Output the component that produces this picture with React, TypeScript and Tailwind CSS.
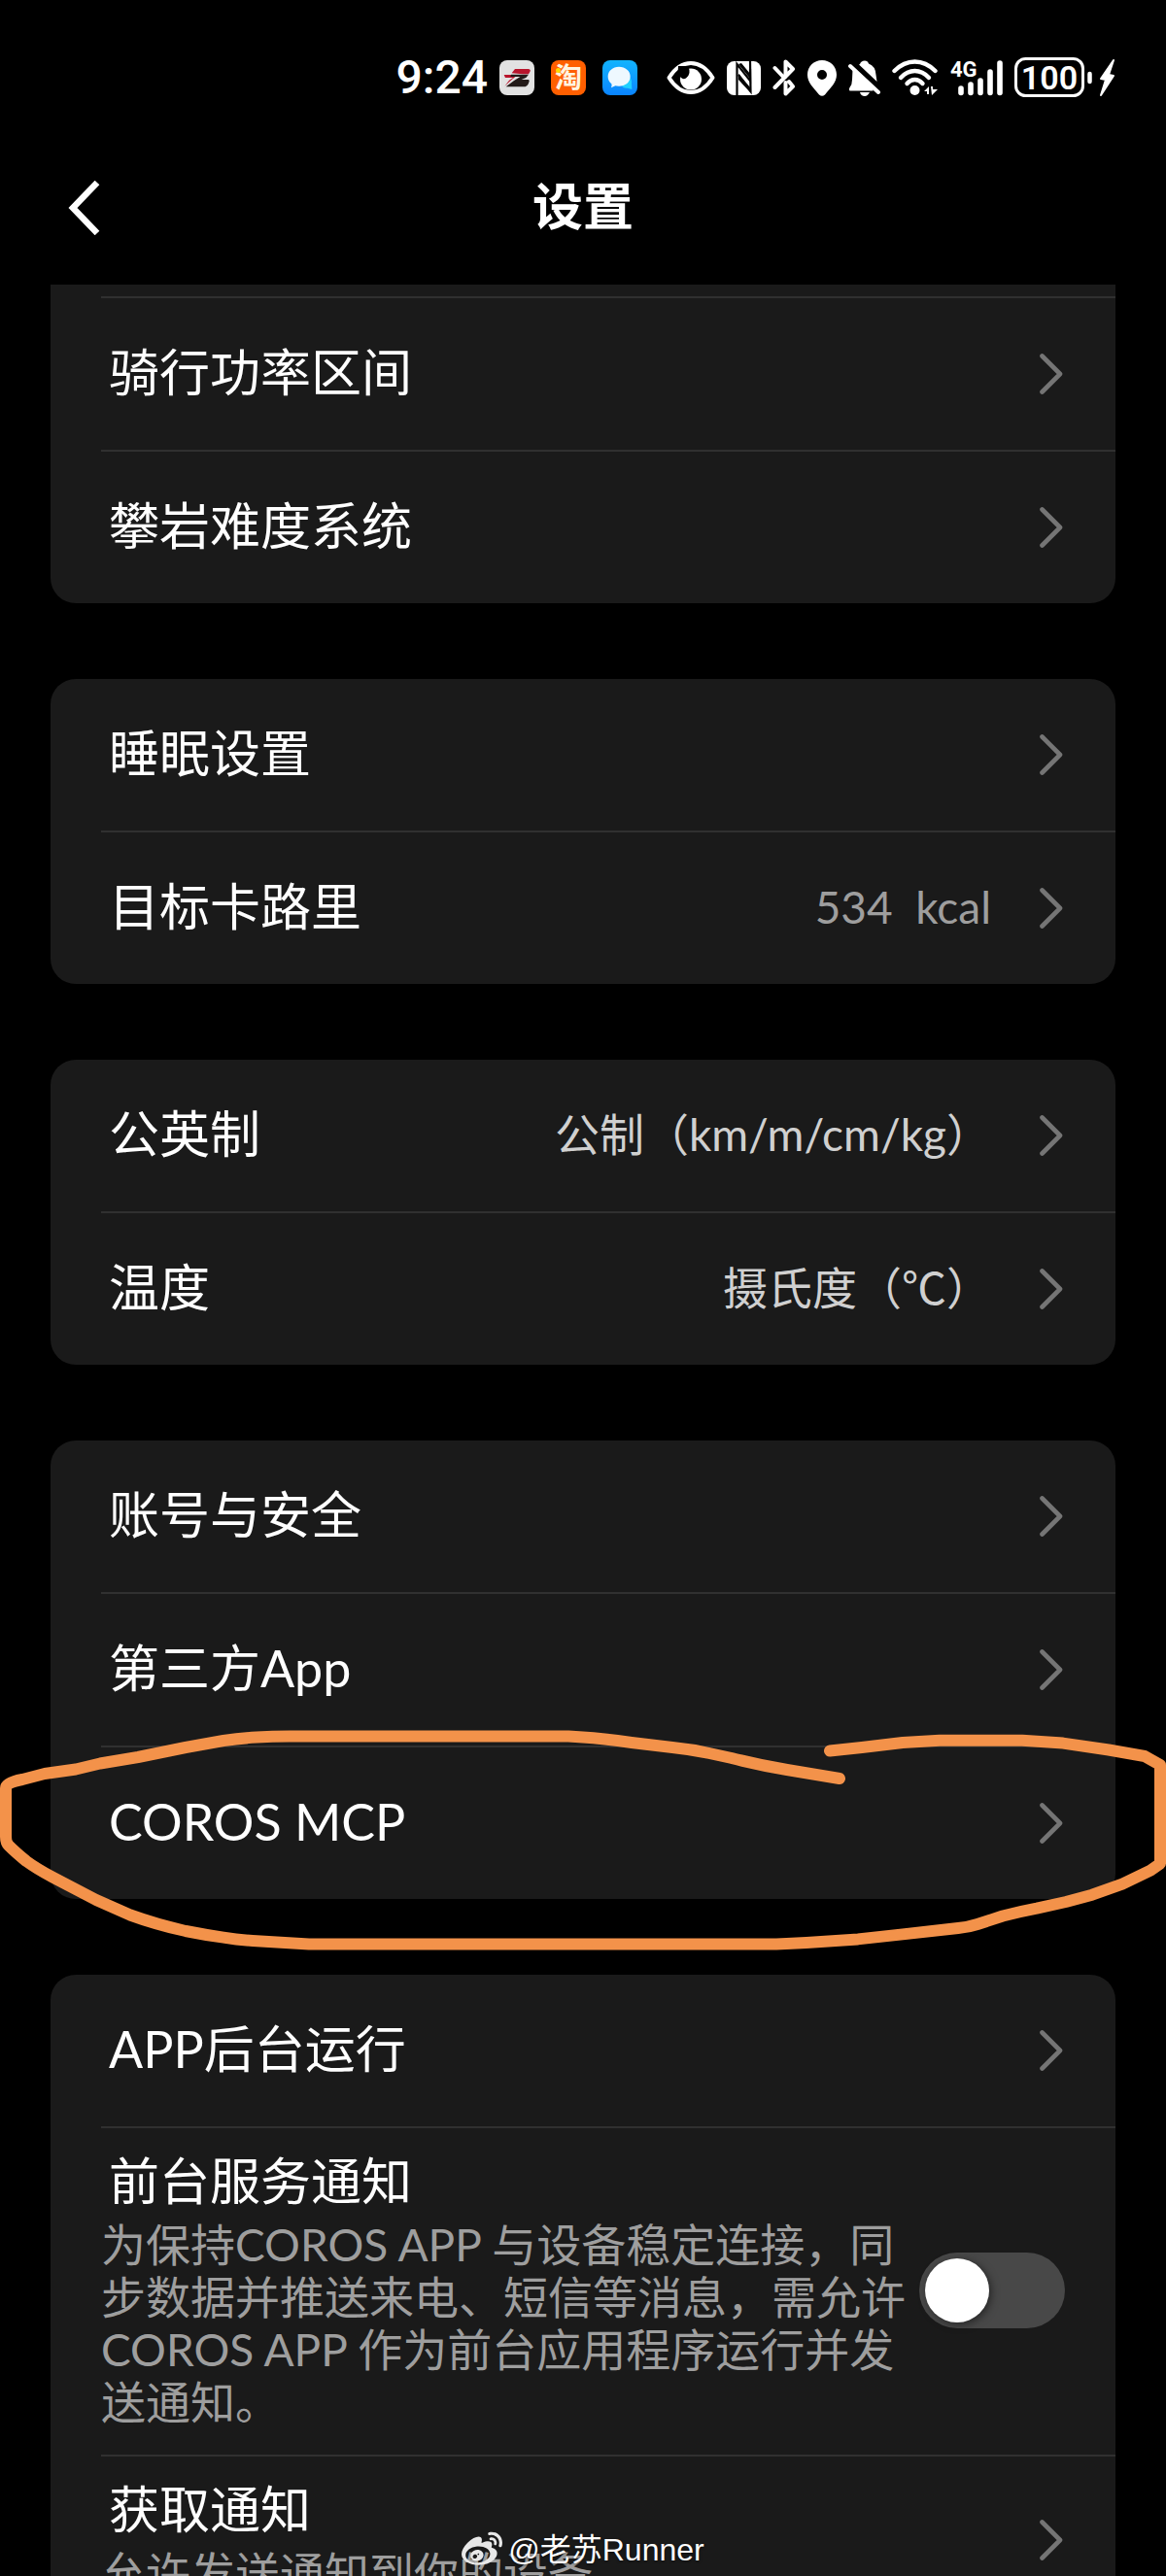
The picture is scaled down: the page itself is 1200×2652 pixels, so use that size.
import { useState } from "react";
import { FaWeibo } from "react-icons/fa";

type Item = {
  label: string;
  value?: string;
  muted?: boolean;
  description?: string;
  toggle?: boolean;
};

const groups: Item[][] = [
  [{ label: "骑行功率区间" }, { label: "攀岩难度系统" }],
  [{ label: "睡眠设置" }, { label: "目标卡路里", value: "534  kcal", muted: true }],
  [
    { label: "公英制", value: "公制（km/m/cm/kg）" },
    { label: "温度", value: "摄氏度（℃）" },
  ],
  [{ label: "账号与安全" }, { label: "第三方App" }, { label: "COROS MCP" }],
  [
    { label: "APP后台运行" },
    {
      label: "前台服务通知",
      description:
        "为保持COROS APP 与设备稳定连接，同步数据并推送来电、短信等消息，需允许COROS APP 作为前台应用程序运行并发送通知。",
      toggle: true,
    },
    { label: "获取通知", description: "允许发送通知到你的设备" },
  ],
];

function Chevron() {
  return (
    <svg className="h-11 w-6 shrink-0" viewBox="0 0 24 44" fill="none" aria-hidden="true">
      <path
        d="M2.5 3.5 L21 22 L2.5 40.5"
        stroke="#757575"
        strokeWidth="4.6"
        strokeLinecap="round"
        strokeLinejoin="round"
      />
    </svg>
  );
}

function Divider() {
  return <div className="ml-13 h-0.5 bg-[#303030]" />;
}

function Row({ item }: { item: Item }) {
  const [on, setOn] = useState(false);

  if (item.description) {
    const text = (
      <span className="flex-1">
        <span className="block pl-2 text-[52px] leading-[60px] text-white">{item.label}</span>
        <span className="mt-[9px] block text-[46px] leading-[54px] text-[#9e9e9e]">
          {item.description}
        </span>
      </span>
    );

    if (item.toggle) {
      return (
        <label className="flex items-center pt-6 pr-13 pb-[27px] pl-13">
          {text}
          <input
            type="checkbox"
            role="switch"
            checked={on}
            onChange={() => setOn(!on)}
            className="relative h-[78px] w-[150px] shrink-0 appearance-none rounded-full bg-[#484848] before:absolute before:top-1.5 before:left-1.5 before:size-[66px] before:rounded-full before:bg-white before:shadow-[2px_2px_8px_rgba(0,0,0,0.5)] checked:bg-[#f3924a] checked:before:left-[78px]"
          />
        </label>
      );
    }

    return (
      <button type="button" className="flex w-full items-center pt-6 pr-[54px] pb-[27px] pl-13 text-left">
        {text}
        <Chevron />
      </button>
    );
  }

  return (
    <button type="button" className="flex h-[156px] w-full items-center pr-[54px] pl-15 text-left">
      <span className="pb-1 text-[52px] leading-[60px] text-white">{item.label}</span>
      <span
        className={`mr-[50px] ml-auto pb-0.5 text-[46px] leading-[54px] whitespace-pre ${
          item.muted ? "text-[#9e9e9e]" : "text-[#d0d0d0]"
        }`}
      >
        {item.value}
      </span>
      <Chevron />
    </button>
  );
}

function Group({ items, cut }: { items: Item[]; cut?: boolean }) {
  return (
    <div className={`overflow-hidden bg-[#1a1a1a] ${cut ? "rounded-b-[26px] pt-3" : "rounded-[26px]"}`}>
      {items.map((item, index) => (
        <div key={item.label}>
          {(index > 0 || cut) && <Divider />}
          <Row item={item} />
        </div>
      ))}
    </div>
  );
}

/* Hand-drawn marker loop around the last row of a group */
function MarkerLoop() {
  return (
    <svg
      className="pointer-events-none absolute inset-x-0 -bottom-[60px] h-60 w-full"
      viewBox="0 1775 1200 240"
      preserveAspectRatio="none"
      fill="none"
      aria-hidden="true"
    >
      <path
        d="M864 1831 L810 1822 Q780 1817 753 1810 L730 1805 Q712 1801 692 1799 L650 1794 Q620 1790 600 1788.6 L585 1787.5 H298 Q280 1787.5 264 1788.6 Q247 1789.5 230 1792 L191 1799 L142 1809 L103 1815.5 L78 1821.5 L46 1826 L23 1832 Q6 1835 6 1841 V1891 Q6 1897 9 1900 Q16 1907 27 1916 Q38 1924 54 1932.5 L99 1956 L134 1971.5 Q160 1981 191 1988 Q211 1992 230 1994.6 Q245 1997 260 1998 L318 2001.4 H799 Q815 2001 830 2000 L883 1996.4 L929 1991.4 L986 1985 Q997 1984 1006 1981 L1032 1972.5 Q1049 1968 1067 1964.6 L1097 1958 L1124 1950.7 L1155 1939.6 L1184 1925.7 L1194 1918.6 V1817 L1178 1808 L1141 1801.5 L1094 1794.6 L1052 1791.8 H967 L929 1794 L887 1799 L854 1802.5"
        stroke="#f3924a"
        strokeWidth="12"
        strokeLinecap="round"
        strokeLinejoin="round"
      />
    </svg>
  );
}

function StatusBar() {
  return (
    <div className="flex items-center justify-end gap-3 pt-[52px] pr-13 font-[Roboto,'Noto_Sans_CJK_SC',sans-serif] text-white">
      <span className="text-[48px] leading-[56px] font-medium">9:24</span>

      <div className="mr-[18px] flex gap-[17px]">
        <svg className="size-9" viewBox="0 0 108 108" aria-hidden="true">
          <rect width="108" height="108" rx="24" fill="#e2e2e2" />
          <path d="M48 27 H90 Q98 29 94 36 L90 43 H72 L38 40 Z" fill="#b8152c" />
          <path d="M14 45 H56 L34 64 L16 80 L30 62 L42 54 H18 Z" fill="#b8152c" />
          <path d="M36 44 H90 L82 54 L68 60 H90 Q94 62 91 68 Q87 82 74 82 H20 L44 64 L64 51 H34 Z" fill="#231a18" />
        </svg>
        <svg className="size-9" viewBox="0 0 36 36" aria-hidden="true">
          <rect width="36" height="36" rx="8" fill="#ff5f00" />
          <text x="4" y="28" fontSize="28" fontWeight="700" fill="#fff4e0">
            淘
          </text>
          <circle cx="7.5" cy="10.5" r="2.5" fill="#ffd800" />
        </svg>
        <svg className="size-9" viewBox="0 0 108 108" aria-hidden="true">
          <defs>
            <linearGradient id="chat" x1="0" y1="0" x2="0" y2="1">
              <stop offset="0" stopColor="#12b4ff" />
              <stop offset="1" stopColor="#0a84ff" />
            </linearGradient>
          </defs>
          <rect width="108" height="108" rx="24" fill="url(#chat)" />
          <path d="M82 50 Q92 58 90 72 L91 90 L78 86 Q66 88 60 80 Z" fill="#1fd0ff" />
          <path
            d="M51 20 C71 20 86 33 86 50 C86 67 71 80 51 80 Q44 80 40 79 L27 85 Q30 78 28 73 Q17 64 17 50 C17 33 32 20 51 20 Z"
            fill="#eef8ff"
          />
        </svg>
      </div>

      {/* eye comfort */}
      <svg className="h-[34px] w-[50px]" viewBox="0 0 50 34" aria-hidden="true">
        <path
          d="M2.5 17 Q12 2 25 2 Q38 2 47.5 17 Q38 32 25 32 Q12 32 2.5 17 Z"
          fill="none"
          stroke="#fff"
          strokeWidth="4"
          strokeLinejoin="round"
        />
        <circle cx="25" cy="18.5" r="11" fill="#fff" />
        <path d="M12 5 H22 Q26 13 20 17.5 Q17 19.5 14.5 16.5 Q11 14 12 5 Z" fill="#000" />
      </svg>

      {/* NFC */}
      <svg className="h-[35px] w-[35px]" viewBox="0 0 35 35" aria-hidden="true">
        <rect width="35" height="35" rx="7.5" fill="#fff" />
        <path
          d="M10.500 35 L10.500 3 L24 20 V8"
          fill="none"
          stroke="#000"
          strokeWidth="2.200"
        />
        <path d="M24 0 L24.500 31 L12 14" fill="none" stroke="#000" strokeWidth="2.200" />
        <path d="M12 3 L24 18 V13 L15 2 Z M12 13 V19 L24 32 V27 Z" fill="#000" />
      </svg>

      {/* bluetooth */}
      <svg className="h-[38px] w-6" viewBox="0 0 24 38" fill="none" aria-hidden="true">
        <path
          d="M2.5 9 L11 18 M2.5 29 L21 10 L13.500 2.500 V18 M13.500 24 V35.500 L21 28 L17 23"
          stroke="#fff"
          strokeWidth="4"
          strokeLinecap="round"
          strokeLinejoin="round"
        />
      </svg>

      {/* location */}
      <svg className="h-[37px] w-[30px]" viewBox="0 0 30 37" aria-hidden="true">
        <path
          fillRule="evenodd"
          fill="#fff"
          d="M15 0 C6.5 0 0 6.5 0 15 C0 23 6 28 12 35.5 Q15 38 18 35.5 C24 28 30 23 30 15 C30 6.5 23.5 0 15 0 Z M15 10 A5 5 0 1 1 15 20 A5 5 0 1 1 15 10 Z"
        />
      </svg>

      {/* muted bell */}
      <svg className="h-[37px] w-[33px]" viewBox="0 0 33 37" aria-hidden="true">
        <path d="M12 4 Q13 0.5 17 0.5 Q20 0.5 21 3.5 Q28 6 28.5 15 L29.5 22 L11 4.5 Z" fill="#fff" />
        <path d="M4.5 9.5 L25.5 29 V31.5 H1.5 Q0 30 1.5 28 Q4 25 4 20 Z" fill="#fff" />
        <path d="M12 33 H22 Q20 37 17 37 Q13 37 12 33 Z" fill="#fff" />
        <path d="M5 4 L33 30" stroke="#000" strokeWidth="3" />
        <path d="M2 6 L31 33" stroke="#fff" strokeWidth="4" strokeLinecap="round" />
      </svg>

      {/* wifi */}
      <svg className="h-[38px] w-[48px]" viewBox="0 0 48 38" fill="none" aria-hidden="true">
        <g stroke="#fff" strokeWidth="4.4" strokeLinecap="round">
          <path d="M2.5 12 Q12 2.5 23.5 2.5 Q35 2.5 44.5 12" />
          <path d="M9 19 Q15.5 12 23.5 12 Q31.5 12 38 19" />
          <path d="M15.5 25 Q19 21 23.5 21 Q28 21 31.5 25" />
        </g>
        <circle cx="23.5" cy="32" r="5" fill="#fff" />
        <path d="M33 33 L38 28 V36 H36 V33 Z M40 28 H42 V31 H47 L41 37 Z" fill="#fff" />
      </svg>

      {/* mobile signal */}
      <svg className="h-[38px] w-[54px] overflow-visible" viewBox="0 0 54 38" aria-hidden="true">
        <text x="0" y="18" fontSize="22" fontWeight="700" fill="#fff">
          4G
        </text>
        <g stroke="#fff" strokeWidth="5.6" strokeLinecap="round">
          <path d="M11 30 V34.5 M21 26 V34.5 M31 22 V34.5 M41 13 V34.5 M51 4 V34.5" />
        </g>
      </svg>

      <div className="flex items-center gap-[7px]">
        <svg className="h-[42px] w-20" viewBox="0 0 80 42" aria-hidden="true">
          <rect x="1.5" y="1.5" width="69" height="38" rx="10" fill="none" stroke="#fff" strokeWidth="3" />
          <path d="M77.5 17 V25" stroke="#fff" strokeWidth="4.5" strokeLinecap="round" />
          <text x="36" y="33" textAnchor="middle" fontSize="34" fontWeight="600" fill="#fff">
            100
          </text>
        </svg>
        <svg className="h-10 w-[17px]" viewBox="0 0 17 40" aria-hidden="true">
          <path
            d="M15 2 L2 21 L7 22 L2 38 L15 18 L10 17 Z"
            fill="#fff"
            stroke="#fff"
            strokeWidth="2"
            strokeLinejoin="round"
          />
        </svg>
      </div>
    </div>
  );
}

export default function App() {
  return (
    <div
      lang="zh-CN"
      className="relative flex h-screen flex-col overflow-hidden bg-black font-[Lato,'Noto_Sans_CJK_SC',sans-serif]"
    >
      <StatusBar />

      <header className="grid h-[185px] shrink-0 grid-cols-[1fr_auto_1fr] items-center px-[66px] pt-[26px]">
        <button type="button" aria-label="返回" className="justify-self-start">
          <svg className="h-14 w-10" viewBox="0 0 40 56" fill="none" aria-hidden="true">
            <path d="M34 2 L9 28 L34 54" stroke="#fff" strokeWidth="6.5" />
          </svg>
        </button>
        <h1 className="pb-1 text-[52px] leading-[60px] font-bold text-white">设置</h1>
      </header>

      <main className="flex flex-col gap-[78px]">
        {groups.map((items, index) => (
          <section key={items[0].label} className="relative px-13">
            <Group items={items} cut={index === 0} />
            {index === 3 && <MarkerLoop />}
          </section>
        ))}
      </main>

      <div className="absolute inset-x-0 bottom-1.5 flex items-center justify-center gap-1.5 font-['Liberation_Sans','Noto_Sans_CJK_SC',sans-serif] text-[32px] leading-10 text-white">
        <FaWeibo className="size-[42px] text-[#e8e8e8]" />
        <span className="[text-shadow:0_1px_3px_rgba(0,0,0,0.6)]">@老苏Runner</span>
      </div>
    </div>
  );
}
